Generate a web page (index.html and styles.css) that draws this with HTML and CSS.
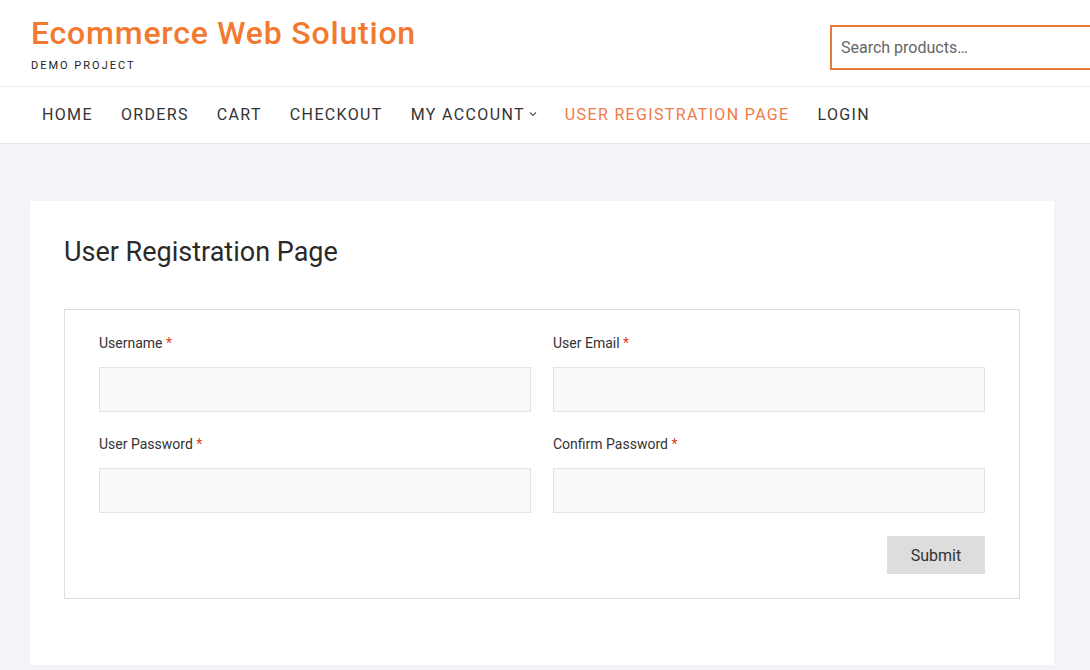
FILE: index.html
```html
<!DOCTYPE html>
<html>
<head>
<meta charset="utf-8">
<link rel="stylesheet" href="styles.css">
</head>
<body>
<header class="site-header">
  <div class="branding">
    <div class="site-title">Ecommerce Web Solution</div>
    <div class="site-desc">DEMO PROJECT</div>
  </div>
  <div class="search">
    <input type="text" class="search-field" placeholder="Search products…">
  </div>
</header>
<nav class="main-nav">
  <ul class="menu">
    <li class="item">HOME</li>
    <li class="item">ORDERS</li>
    <li class="item">CART</li>
    <li class="item">CHECKOUT</li>
    <li class="item">MY ACCOUNT <svg class="chev" width="8" height="6" viewBox="0 0 8 6"><path d="M1 1.5 L4 4.5 L7 1.5" fill="none" stroke="#555" stroke-width="1.1"/></svg></li>
    <li class="item active">USER REGISTRATION PAGE</li>
    <li class="item">LOGIN</li>
  </ul>
</nav>
<main class="content">
  <article class="card">
    <h1 class="page-title">User Registration Page</h1>
    <form class="reg-form">
      <div class="grid">
        <div class="field">
          <label class="label">Username <span class="req">*</span></label>
          <input class="input" type="text">
        </div>
        <div class="field">
          <label class="label">User Email <span class="req">*</span></label>
          <input class="input" type="text">
        </div>
        <div class="field">
          <label class="label">User Password <span class="req">*</span></label>
          <input class="input" type="password">
        </div>
        <div class="field">
          <label class="label">Confirm Password <span class="req">*</span></label>
          <input class="input" type="password">
        </div>
      </div>
      <div class="actions">
        <button type="button" class="submit">Submit</button>
      </div>
    </form>
  </article>
</main>
</body>
</html>
```
FILE: styles.css
```css
* { box-sizing: border-box; }
html, body { margin: 0; padding: 0; }
body {
  font-family: Roboto, "Liberation Sans", sans-serif;
  background: #f3f4f7;
  color: #333;
  width: 1090px;
  height: 670px;
  overflow: hidden;
}
.site-header {
  background: #fff;
  height: 87px;
  border-bottom: 1px solid #ececec;
  display: flex;
  justify-content: space-between;
  padding: 0 0 0 31px;
}
.branding { padding-top: 14px; }
.site-title {
  font-size: 32px;
  font-weight: 500;
  color: #f27a30;
  line-height: 38px;
  letter-spacing: 0.8px;
}
.site-desc {
  margin-top: 7px;
  font-size: 11px;
  letter-spacing: 2px;
  color: #222;
  line-height: 14px;
}
.search { padding-top: 25px; width: 260px; }
.search-field {
  width: 280px;
  height: 45px;
  border: 2px solid #e6793a;
  outline: none;
  padding: 0 9px;
  font-family: Roboto, "Liberation Sans", sans-serif;
  font-size: 16px;
  color: #555;
  background: #fff;
}
.search-field::placeholder { color: #666; }
.main-nav {
  background: #fff;
  height: 57px;
  border-bottom: 1px solid #e6e7ea;
}
.menu {
  list-style: none;
  margin: 0;
  padding: 0 0 2px 28px;
  display: flex;
  height: 56px;
  align-items: center;
}
.item {
  padding: 0 14px;
  font-size: 16px;
  letter-spacing: 1.35px;
  color: #333;
  display: flex;
  align-items: center;
}
.chev { margin-left: 4px; }
.item.active { color: #f07a48; }
.content { padding: 57px 36px 0 30px; }
.card {
  background: #fff;
  height: 464px;
  padding: 33px 34px 0 34px;
}
.page-title {
  margin: 0;
  font-size: 27px;
  font-weight: 400;
  line-height: 36px;
  color: #2a2a2a;
}
.reg-form {
  margin-top: 39px;
  border: 1px solid #ddd;
  padding: 23px 34px 24px 34px;
}
.grid {
  display: grid;
  grid-template-columns: 432px 432px;
  column-gap: 22px;
  row-gap: 22px;
}
.field { display: flex; flex-direction: column; }
.label {
  font-size: 14px;
  line-height: 20px;
  color: #333;
  margin-bottom: 14px;
}
.req { color: #e2401c; }
.input {
  height: 45px;
  background: #f9f9f9;
  border: 1px solid #e3e3e3;
  outline: none;
}
.actions {
  display: flex;
  justify-content: flex-end;
  margin-top: 23px;
}
.submit {
  width: 98px;
  height: 38px;
  background: #dddddd;
  border: none;
  font-family: Roboto, "Liberation Sans", sans-serif;
  font-size: 16px;
  color: #333;
}
```
